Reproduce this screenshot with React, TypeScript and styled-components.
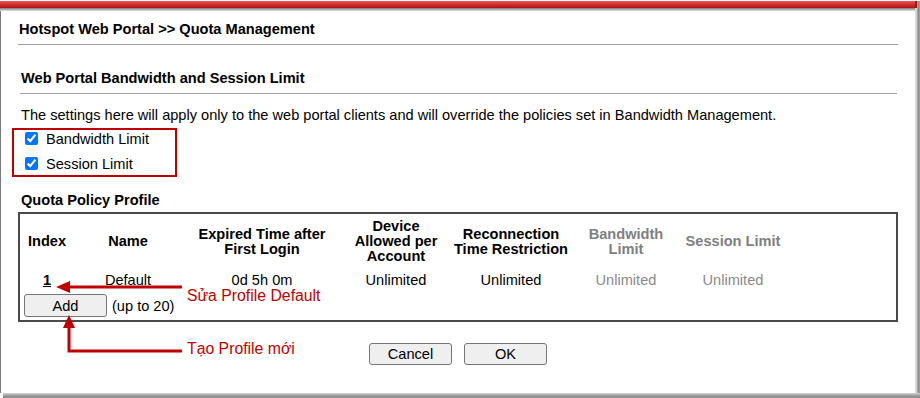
import React from 'react';
import styled, { createGlobalStyle } from 'styled-components';

const GlobalStyle = createGlobalStyle`
  html, body { margin: 0; padding: 0; background: #fff; }
  body { font-family: "Liberation Sans", Arial, sans-serif; color: #000; }
  * { box-sizing: border-box; }
`;

const Frame = styled.div`
  position: relative;
  width: 920px;
  height: 398px;
  display: flex;
  flex-direction: column;
  background: #fff;
  overflow: hidden;
`;

const MainRow = styled.div`
  display: flex;
  flex: 1;
  min-height: 0;
`;

const Window = styled.div`
  flex: 1;
  display: flex;
  flex-direction: column;
  border-left: 1px solid #7a7a7a;
`;

const TopBar = styled.div`
  flex: 0 0 11px;
  height: 11px;
  margin-left: -1px;
  background:
    linear-gradient(180deg, #e65a5a 0%, #dc3c3c 30%, #cc2424 65%, #a81414 100%) 0 1px / 100% 7px no-repeat,
    linear-gradient(180deg, #7a7a7a 0%, #b0b0b0 50%, #e6e6e6 100%) 0 8px / 100% 3px no-repeat,
    #ffffff;
`;

const RightShadow = styled.div`
  width: 5px;
  flex: none;
  background:
    linear-gradient(180deg, #ffffff 0%, #ffffff 100%) 0 0 / 100% 1px no-repeat,
    linear-gradient(180deg, #a81414 0%, #a81414 100%) 0 1px / 2px 7px no-repeat,
    linear-gradient(90deg, #c4c4c4 0%, #ececec 20%, #b0b0b0 45%, #8c8c8c 70%, #a6a6a6 100%);
`;

const BottomShadow = styled.div`
  height: 5px;
  flex: none;
  margin-left: 3px;
  background: linear-gradient(180deg, #d6d6d6 0%, #a8a8a8 40%, #8a8a8a 80%, #9c9c9c 100%);
`;

const Content = styled.div`
  flex: 1;
  display: flex;
  flex-direction: column;
  padding: 9px 17px 0 17px;
  font-size: 14.6px;
`;

const PageTitle = styled.div`
  font-weight: bold;
  line-height: 18px;
  padding: 0 0 6px 1px;
  border-bottom: 1px solid #a0a0a0;
`;

const SectionTitle = styled.div`
  margin: 24px 1px 0 2px;
  font-weight: bold;
  line-height: 18px;
  padding: 0 0 6px 1px;
  border-bottom: 1px solid #a0a0a0;
`;

const Description = styled.div`
  margin-top: 12px;
  padding-left: 3px;
  line-height: 18px;
  white-space: nowrap;
`;

const HighlightBox = styled.div`
  margin: 4px 0 0 -6px;
  width: 165px;
  border: 2px solid #c00000;
  padding: 0 0 3px 11px;
  display: flex;
  flex-direction: column;
  gap: 8px;
`;

const CheckRow = styled.label`
  display: flex;
  align-items: center;
  gap: 8px;
  height: 17px;
`;

const Check = styled.input`
  margin: 0;
  width: 13px;
  height: 13px;
  accent-color: #0075ff;
`;

const SubTitle = styled.div`
  margin-top: 14px;
  padding-left: 3px;
  font-weight: bold;
  line-height: 18px;
`;

const TableBox = styled.div`
  margin-top: 3px;
  border: 2px solid #4a4a4a;
  display: flex;
  flex-direction: column;
`;

const Row = styled.div<{ $head?: boolean }>`
  display: grid;
  grid-template-columns: 56px 106px 162px 106px 124px 106px 108px 1fr;
  align-items: center;
  padding: ${(p) => (p.$head ? '5px 0 4px' : '0')};
  height: ${(p) => (p.$head ? '54px' : '24px')};
  margin-left: -1px;
`;

const HeadCell = styled.div<{ $muted?: boolean }>`
  text-align: center;
  font-weight: bold;
  line-height: 15px;
  white-space: nowrap;
  color: ${(p) => (p.$muted ? '#808080' : '#000')};
`;

const Cell = styled.div<{ $muted?: boolean }>`
  text-align: center;
  line-height: 18px;
  color: ${(p) => (p.$muted ? '#8a8a8a' : '#000')};
`;

const IndexLink = styled.a`
  color: #000;
  text-decoration: underline;
  font-weight: bold;
`;

const AddRow = styled.div`
  display: flex;
  align-items: center;
  gap: 5px;
  margin: 2px 0 3px 4px;
`;

const Button = styled.button<{ $h?: number }>`
  width: 83px;
  height: ${(p) => p.$h ?? 22}px;
  padding: 0;
  background: #efefef;
  border: 1px solid #767676;
  border-radius: 3px;
  font-family: "Liberation Sans", Arial, sans-serif;
  font-size: 14.6px;
  color: #000;
`;

const ButtonBar = styled.div`
  margin-top: 21px;
  display: flex;
  justify-content: center;
  gap: 12px;
`;

const Overlay = styled.svg`
  position: absolute;
  left: 0;
  top: 0;
  pointer-events: none;
`;

const Note = styled.div<{ $x: number; $y: number }>`
  position: absolute;
  left: ${(p) => p.$x}px;
  top: ${(p) => p.$y}px;
  font-size: 15.8px;
  line-height: 18px;
  color: #c00000;
  white-space: nowrap;
`;

const RED = '#c00000';

export default function App() {
  return (
    <>
      <GlobalStyle />
      <Frame>
        <MainRow>
          <Window>
            <TopBar />
            <Content>
              <PageTitle>Hotspot Web Portal &gt;&gt; Quota Management</PageTitle>
              <SectionTitle>Web Portal Bandwidth and Session Limit</SectionTitle>
              <Description>
                The settings here will apply only to the web portal clients and will override the policies set in Bandwidth Management.
              </Description>
              <HighlightBox>
                <CheckRow>
                  <Check type="checkbox" defaultChecked />
                  Bandwidth Limit
                </CheckRow>
                <CheckRow>
                  <Check type="checkbox" defaultChecked />
                  Session Limit
                </CheckRow>
              </HighlightBox>
              <SubTitle>Quota Policy Profile</SubTitle>
              <TableBox>
                <Row $head>
                  <HeadCell>Index</HeadCell>
                  <HeadCell>Name</HeadCell>
                  <HeadCell>Expired Time after<br />First Login</HeadCell>
                  <HeadCell>Device<br />Allowed per<br />Account</HeadCell>
                  <HeadCell>Reconnection<br />Time Restriction</HeadCell>
                  <HeadCell $muted>Bandwidth<br />Limit</HeadCell>
                  <HeadCell $muted>Session Limit</HeadCell>
                  <div />
                </Row>
                <Row>
                  <Cell><IndexLink href="#">1</IndexLink></Cell>
                  <Cell>Default</Cell>
                  <Cell>0d 5h 0m</Cell>
                  <Cell>Unlimited</Cell>
                  <Cell>Unlimited</Cell>
                  <Cell $muted>Unlimited</Cell>
                  <Cell $muted>Unlimited</Cell>
                  <div />
                </Row>
                <AddRow>
                  <Button $h={23}>Add</Button>
                  (up to 20)
                </AddRow>
              </TableBox>
              <ButtonBar>
                <Button>Cancel</Button>
                <Button>OK</Button>
              </ButtonBar>
            </Content>
          </Window>
          <RightShadow />
        </MainRow>
        <BottomShadow />
        <Overlay width="920" height="398" viewBox="0 0 920 398">
          <line x1="182" y1="287" x2="66" y2="287" stroke={RED} strokeWidth="3" />
          <polygon points="56,287 70,281 70,293" fill={RED} />
          <polyline points="182,351 69,351 69,325" fill="none" stroke={RED} strokeWidth="3" />
          <polygon points="69,315 63,328 75,328" fill={RED} />
        </Overlay>
        <Note $x={187} $y={287}>Sửa Profile Default</Note>
        <Note $x={187} $y={340}>Tạo Profile mới</Note>
      </Frame>
    </>
  );
}
